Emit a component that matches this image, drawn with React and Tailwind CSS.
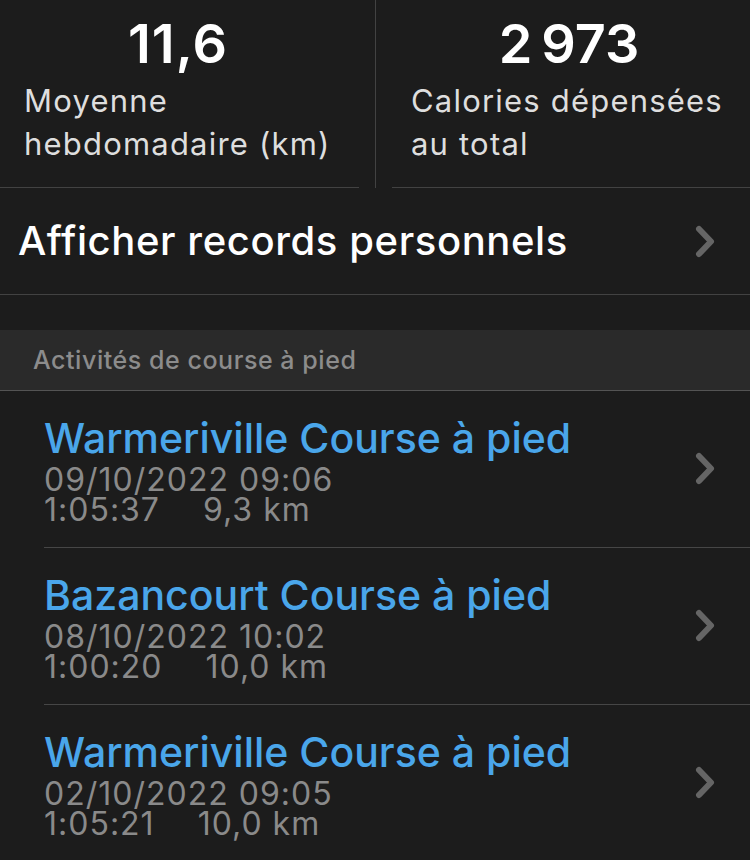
import React from "react";

const activities = [
  { title: "Warmeriville Course à pied", date: "09/10/2022 09:06", time: "1:05:37", dist: "9,3 km" },
  { title: "Bazancourt Course à pied", date: "08/10/2022 10:02", time: "1:00:20", dist: "10,0 km" },
  { title: "Warmeriville Course à pied", date: "02/10/2022 09:05", time: "1:05:21", dist: "10,0 km" },
];

function Chevron() {
  return (
    <svg width="20" height="33" viewBox="0 0 20 33" fill="none" className="shrink-0">
      <path
        d="M4 4 L16 16.5 L4 29"
        stroke="#656565"
        strokeWidth="6"
        strokeLinecap="round"
        strokeLinejoin="round"
      />
    </svg>
  );
}

function Stat({ value, lines, className }) {
  return (
    <div className={className}>
      <div className="pt-[17px] text-center text-[54px] font-semibold leading-none tracking-[1px] text-white">
        {value}
      </div>
      <div className="mt-[8px] whitespace-nowrap text-[31px] leading-[43px] tracking-[1.2px] text-[#dedede]">
        {lines.map((l) => (
          <div key={l}>{l}</div>
        ))}
      </div>
    </div>
  );
}

export default function App() {
  return (
    <div
      className="h-[860px] w-[750px] overflow-hidden bg-[#1c1c1c]"
      style={{ fontFamily: "Inter, 'Noto Sans', sans-serif" }}
    >
      {/* Stats */}
      <div className="flex h-[188px]">
        <div className="flex w-[375px] flex-col">
          <Stat
            value="11,6"
            lines={["Moyenne", "hebdomadaire (km)"]}
            className="flex-1 pl-[24px] pr-[43px]"
          />
          <div className="mr-[16px] h-px bg-[#424242]" />
        </div>
        <div className="w-px bg-[#424242]" />
        <div className="flex flex-1 flex-col">
          <Stat
            value={"2\u202F973"}
            lines={["Calories dépensées", "au total"]}
            className="flex-1 pl-[35px] pr-[23px]"
          />
          <div className="ml-[16px] h-px bg-[#424242]" />
        </div>
      </div>

      {/* Records */}
      <div className="flex h-[107px] items-center justify-between border-b border-[#424242] pl-[18px] pr-[35px]">
        <span className="text-[40px] font-medium leading-none tracking-[0.6px] text-white">
          Afficher records personnels
        </span>
        <Chevron />
      </div>

      <div className="h-[35px]" />

      {/* Section header */}
      <div className="flex h-[61px] items-center border-b border-[#545454] bg-[#2a2a2a] pl-[33px]">
        <span className="text-[25px] font-medium leading-none tracking-[0.55px] text-[#8c8c8c]">
          Activités de course à pied
        </span>
      </div>

      {/* Activities */}
      {activities.map((a, i) => (
        <div key={i} className="pl-[44px]">
          <div className="flex items-center justify-between border-b border-[#464646] pb-[22px] pr-[35px] pt-[21px]">
            <div>
              <div className="text-[41px] font-medium leading-[53px] text-[#4aa6ea]">
                {a.title}
              </div>
              <div className="text-[32px] leading-[30px] tracking-[1px] text-[#8a8a8a]">
                {a.date}
              </div>
              <div className="flex gap-[43px] text-[32px] leading-[30px] tracking-[1px] text-[#8a8a8a]">
                <span>{a.time}</span>
                <span>{a.dist}</span>
              </div>
            </div>
            <Chevron />
          </div>
        </div>
      ))}
    </div>
  );
}
